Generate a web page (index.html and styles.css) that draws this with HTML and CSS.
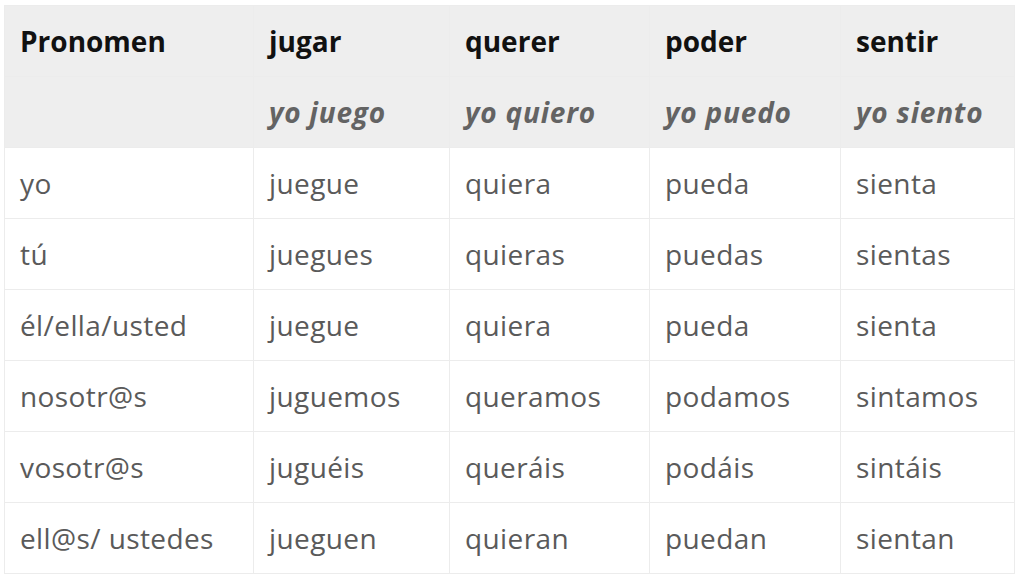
FILE: index.html
```html
<!DOCTYPE html>
<html>
<head>
<meta charset="utf-8">
<link rel="stylesheet" href="styles.css">
</head>
<body>
<table class="conj">
  <colgroup>
    <col class="c1"><col class="c2"><col class="c3"><col class="c4"><col class="c5">
  </colgroup>
  <thead>
    <tr class="head"><th>Pronomen</th><th>jugar</th><th>querer</th><th>poder</th><th>sentir</th></tr>
    <tr class="sub"><td></td><td>yo juego</td><td>yo quiero</td><td>yo puedo</td><td>yo siento</td></tr>
  </thead>
  <tbody>
    <tr><td>yo</td><td>juegue</td><td>quiera</td><td>pueda</td><td>sienta</td></tr>
    <tr><td>tú</td><td>juegues</td><td>quieras</td><td>puedas</td><td>sientas</td></tr>
    <tr><td>él/ella/usted</td><td>juegue</td><td>quiera</td><td>pueda</td><td>sienta</td></tr>
    <tr><td>nosotr@s</td><td>juguemos</td><td>queramos</td><td>podamos</td><td>sintamos</td></tr>
    <tr><td>vosotr@s</td><td>juguéis</td><td>queráis</td><td>podáis</td><td>sintáis</td></tr>
    <tr><td>ell@s/ ustedes</td><td>jueguen</td><td>quieran</td><td>puedan</td><td>sientan</td></tr>
  </tbody>
</table>
</body>
</html>
```
FILE: styles.css
```css
html, body {
  margin: 0;
  padding: 0;
  background: #ffffff;
}
body {
  padding: 5px 0 0 4px;
  font-family: "Open Sans", "Noto Sans", sans-serif;
}
.conj {
  border-collapse: collapse;
  table-layout: fixed;
  width: 1010px;
}
.c1 { width: 249px; }
.c2 { width: 196px; }
.c3 { width: 200px; }
.c4 { width: 191px; }
.c5 { width: 174px; }
.conj th, .conj td {
  height: 70px;
  padding: 0 0 0 15px;
  border: 1px solid #ececec;
  text-align: left;
  vertical-align: middle;
  font-size: 28px;
  letter-spacing: 0.4px;
  color: #5a5a5a;
  white-space: nowrap;
}
.head th, .sub td {
  background: #eeeeee;
}
.head th {
  font-weight: 700;
  letter-spacing: 0;
  color: #111111;
}
.sub td {
  font-style: italic;
  font-weight: 700;
  letter-spacing: 0.8px;
  color: #636363;
}
```
